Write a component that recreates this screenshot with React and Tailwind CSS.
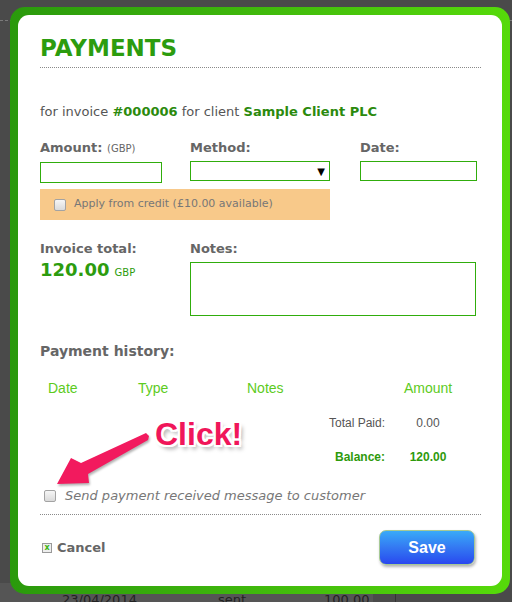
import React from 'react';

const verdana = "font-['DejaVu_Sans',Verdana,sans-serif]";
const arial = "font-['Liberation_Sans',Arial,sans-serif]";

const Checkbox = () => (
  <span className="block w-[12px] h-[12px] shrink-0 rounded-[2px] border border-[#a3a3a3] bg-linear-to-b from-[#f6f6f6] to-[#dadada]" />
);

const Label = ({ children }) => (
  <div className="h-[16px] text-[13px] leading-[16px] font-bold text-[#666]">{children}</div>
);

const ClickArrow = () => (
  <svg
    className="absolute left-[32px] top-[415px] drop-shadow-[1px_2px_1px_rgba(0,0,0,0.3)]"
    width="105"
    height="75"
    viewBox="50 430 105 75"
  >
    <polygon
      points="57,484 71,458 81,463 146,433 149,436 148,440 88,474 89,483"
      fill="#f21a5e"
    />
  </svg>
);

export default function App() {
  return (
    <div className={`relative w-[512px] h-[602px] overflow-hidden bg-[#4a4a4a] ${verdana}`}>
      {/* page behind the dialog */}
      <div className="flex flex-col h-full">
        <div className="mt-[20px] border-t border-dashed border-[#7a7a7a]" />
        <div className="mt-auto h-[19px] flex">
          <div className="w-[373px] bg-[#555] flex items-start pt-[9px] text-[13px] leading-[16px] text-[#222]">
            <span className="ml-[62px]">23/04/2014</span>
            <span className="ml-[81px]">sent</span>
            <span className="ml-[78px]">
              100.00 <span className="text-[10px]">EUR</span>
            </span>
          </div>
          <div className="ml-[22px] w-px bg-[#333]" />
        </div>
      </div>

      {/* dialog */}
      <div className="absolute left-[10px] top-[7px] w-[500px] h-[587px] rounded-[15px] p-[8px] bg-linear-to-r from-[#2a990c] to-[#56da0a]">
        <div className="relative h-full rounded-[11px] bg-white pt-[19px] pl-[22px] pr-[21px]">
          <h1 className="text-[23px] leading-[28px] font-bold text-[#2c9c0e]">PAYMENTS</h1>
          <div className="mt-[5px] border-t border-dotted border-[#8a8a8a]" />

          <p className="mt-[36px] text-[13px] leading-[16px] text-[#555]">
            for invoice <b className="text-[#2b8a0d]">#000006</b> for client{' '}
            <b className="text-[#2b8a0d]">Sample Client PLC</b>
          </p>

          <div className="mt-[20px] grid grid-cols-[150px_170px_1fr]">
            <div>
              <Label>
                Amount: <span className="text-[10px] font-normal">(GBP)</span>
              </Label>
              <div className="mt-[6px] w-[122px] h-[21px] border border-[#30ad0c]" />
            </div>
            <div>
              <Label>Method:</Label>
              <div className="mt-[5px] w-[140px] h-[20px] border border-[#30ad0c] flex items-center justify-end pr-[4px] text-[10px] text-black">
                ▼
              </div>
            </div>
            <div>
              <Label>Date:</Label>
              <div className="mt-[5px] w-[117px] h-[20px] border border-[#30ad0c]" />
            </div>
          </div>

          <div className="mt-[6px] w-[290px] h-[31px] bg-[#f8c98a] flex items-center gap-[8px] pl-[14px] text-[11px] text-[#777]">
            <Checkbox />
            <span>Apply from credit (£10.00 available)</span>
          </div>

          <div className="mt-[21px] grid grid-cols-[150px_1fr]">
            <div>
              <Label>Invoice total:</Label>
              <div className="mt-[2px] leading-[22px] text-[#2c9c0e]">
                <span className="text-[18px] font-bold">120.00</span>{' '}
                <span className="text-[10px]">GBP</span>
              </div>
            </div>
            <div>
              <Label>Notes:</Label>
              <div className="mt-[5px] w-[286px] h-[54px] border border-[#30ad0c]" />
            </div>
          </div>

          <h2 className="mt-[26px] text-[14px] leading-[18px] font-bold text-[#666]">Payment history:</h2>

          <div className={arial}>
            <div className="mt-[19px] flex text-[14px] leading-[18px] text-[#5dcb1d]">
              <span className="w-[98px] pl-[8px]">Date</span>
              <span className="w-[109px]">Type</span>
              <span className="w-[145px]">Notes</span>
              <span className="w-[72px] text-center">Amount</span>
            </div>
            <div className="mt-[18px] flex text-[12px] leading-[16px] text-[#555]">
              <span className="w-[345px] text-right">Total Paid:</span>
              <span className="ml-[7px] w-[72px] text-center">0.00</span>
            </div>
            <div className="mt-[18px] flex text-[12px] leading-[16px] font-bold text-[#2e9a0c]">
              <span className="w-[345px] text-right">Balance:</span>
              <span className="ml-[7px] w-[72px] text-center">120.00</span>
            </div>
          </div>

          <label className="mt-[23px] flex items-center gap-[9px] pl-[4px] text-[13px] leading-[16px] italic text-[#777]">
            <Checkbox />
            <span>Send payment received message to customer</span>
          </label>

          <div className="mt-[10px] border-t border-dotted border-[#8a8a8a]" />

          <div className="mt-[15px] flex items-center justify-between">
            <div className="flex items-center gap-[5px] pl-[2px]">
              <span className="w-[10px] h-[10px] border border-[#999] bg-[#eee] flex items-center justify-center text-[8px] leading-none font-bold text-[#3cb515]">
                x
              </span>
              <span className="text-[13px] leading-[16px] font-bold text-[#666]">Cancel</span>
            </div>
            <button
              className={`mr-[6px] w-[96px] h-[35px] rounded-[7px] border border-[#a6c995] bg-linear-to-b from-[#3aaaf8] via-[#3478f2] to-[#2b46ef] shadow-[1px_2px_3px_rgba(0,0,0,0.3)] text-white text-[16px] font-bold ${arial}`}
            >
              Save
            </button>
          </div>

          {/* annotation */}
          <ClickArrow />
          <div
            className={`absolute left-[137px] top-[403px] text-[32px] leading-[32px] font-bold text-[#f0165a] ${arial} [text-shadow:-2px_-2px_0_#fff,2px_-2px_0_#fff,-2px_2px_0_#fff,2px_2px_0_#fff,0_-2px_0_#fff,0_2px_0_#fff,-2px_0_0_#fff,2px_0_0_#fff,3px_4px_4px_rgba(0,0,0,0.35)]`}
          >
            Click!
          </div>
        </div>
      </div>
    </div>
  );
}
